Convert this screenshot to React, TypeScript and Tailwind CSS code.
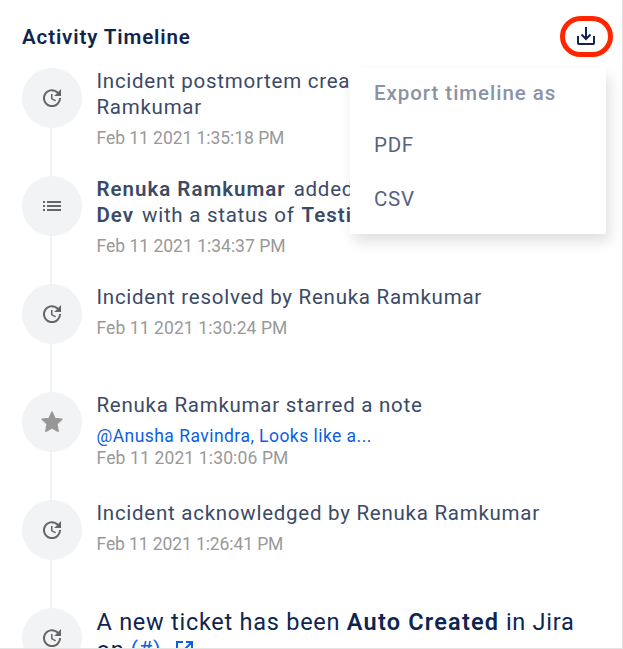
import type { ReactNode } from "react";

function UpdateIcon() {
  return (
    <svg width="24" height="24" viewBox="0 0 24 24" fill="#666">
      <path d="M21 10.12h-6.78l2.74-2.82c-2.73-2.7-7.15-2.8-9.88-.1-2.73 2.71-2.73 7.08 0 9.79s7.15 2.71 9.88 0C18.32 15.65 19 14.08 19 12.1h2c0 1.98-.88 4.55-2.64 6.29-3.51 3.48-9.21 3.48-12.72 0-3.5-3.47-3.53-9.11-.02-12.58s9.14-3.47 12.65 0L21 3v7.12zM12.5 8v4.25l3.5 2.08-.72 1.21L11 13V8h1.5z" />
    </svg>
  );
}

function ListIcon() {
  return (
    <svg width="24" height="24" viewBox="0 0 24 24" fill="#666">
      <path d="M3 13h2v-2H3v2zm0 4h2v-2H3v2zm0-8h2V7H3v2zm4 4h14v-2H7v2zm0 4h14v-2H7v2zM7 7v2h14V7H7z" />
    </svg>
  );
}

function StarIcon() {
  return (
    <svg width="24" height="24" viewBox="0 0 24 24" fill="#979797" stroke="#979797" strokeWidth="1.4" strokeLinejoin="round">
      <path d="M12 2l2.900 6.400 7.100.8-5.200 4.700 1.400 7.500-6.200-3.600-6.200 3.600 1.400-7.500L2 9.200l7.100-.8z" />
    </svg>
  );
}

function DownloadIcon() {
  return (
    <svg className="mr-[2px] mb-[2px]" width="20" height="20" viewBox="0 0 20 20" fill="none" stroke="#0f2550" strokeWidth="2">
      <path d="M10 1v12M5.500 8.500L10 13l4.500-4.500M2 10v7.200q0 .8.800.8h14.400q.8 0 .8-.8V10" />
    </svg>
  );
}

function Row({ icon, children, last }: { icon: ReactNode; children: ReactNode; last?: boolean }) {
  return (
    <li className="flex h-[108px] shrink-0 gap-[14.5px]">
      <div className="flex w-[60px] shrink-0 flex-col items-center">
        <div className="flex size-[60px] shrink-0 items-center justify-center rounded-full bg-[#f2f3f5]">{icon}</div>
        {!last && <div className="mr-[2px] w-[2px] grow bg-[#f2f3f5]" />}
      </div>
      <div className="min-w-0 whitespace-nowrap">{children}</div>
    </li>
  );
}

function Stamp({ children, tracking }: { children: ReactNode; tracking: string }) {
  return <div className={`text-[17.5px] leading-[22px] text-[#999] ${tracking}`}>{children}</div>;
}

function Strong({ children, className = "" }: { children: ReactNode; className?: string }) {
  return <b className={`font-semibold tracking-[1px] ${className}`}>{children}</b>;
}

export default function App() {
  return (
    <div className="relative flex h-[649px] w-[623px] flex-col overflow-hidden border-r border-b border-[#e4e4e4] bg-white font-['Roboto','Liberation_Sans',sans-serif] text-[20.5px] leading-[26px] tracking-[0.74px] text-[#3b4a66]">
      <header className="flex h-[68px] shrink-0 items-start justify-between pt-4 pr-[9px] pl-[22px]">
        <h1 className="pt-2 font-semibold tracking-[0.88px] text-[#0f2550]">Activity Timeline</h1>
        <button className="flex h-[41px] w-[53px] items-center justify-center rounded-[21px] border-[5px] border-[#ff2600]">
          <DownloadIcon />
        </button>
      </header>
      <ul className="flex flex-col pl-[22px]">
        <Row icon={<UpdateIcon />}>
          <div className="mb-[7px]">
            <p>Incident postmortem created by</p>
            <p>Ramkumar</p>
          </div>
          <Stamp tracking="tracking-[-0.05px]">Feb 11 2021 1:35:18 PM</Stamp>
        </Row>
        <Row icon={<ListIcon />}>
          <div className="mb-[7px]">
            <p><Strong className="mr-[8px]">Renuka Ramkumar</Strong>added</p>
            <p><Strong className="mr-[8px]">Dev</Strong>with a status of<Strong className="ml-[7px]">Testing</Strong></p>
          </div>
          <Stamp tracking="tracking-[0px]">Feb 11 2021 1:34:37 PM</Stamp>
        </Row>
        <Row icon={<UpdateIcon />}>
          <p className="mb-[7px]">Incident resolved by Renuka Ramkumar</p>
          <Stamp tracking="tracking-[0.09px]">Feb 11 2021 1:30:24 PM</Stamp>
        </Row>
        <Row icon={<StarIcon />}>
          <p className="mb-[7px]">Renuka Ramkumar starred a note</p>
          <a className="block text-[17.5px] leading-[22px] tracking-[0.46px] text-[#0b5fe0]">@Anusha Ravindra, Looks like a...</a>
          <Stamp tracking="tracking-[0.14px]">Feb 11 2021 1:30:06 PM</Stamp>
        </Row>
        <Row icon={<UpdateIcon />}>
          <p className="mb-[7px]">Incident acknowledged by Renuka Ramkumar</p>
          <Stamp tracking="tracking-[-0.1px]">Feb 11 2021 1:26:41 PM</Stamp>
        </Row>
        <Row icon={<UpdateIcon />} last>
          <div className="text-[23.5px] leading-[28px] text-[#0f2550]">
            <p>A new ticket has been <b className="font-semibold tracking-[1.2px]">Auto Created</b> in Jira</p>
            <p className="flex">on <a className="ml-[6px] flex text-[22px] text-[#0b5fe0]">(#)
              <svg className="mt-1 ml-[14px]" width="18" height="18" viewBox="0 0 18 18" fill="none" stroke="currentColor" strokeWidth="2"><path d="M8 2H2v15h15v-6M11 2h6v6M17 2L7 12" /></svg>
            </a></p>
          </div>
        </Row>
      </ul>
      <div className="absolute top-[68px] left-[350px] flex h-[166px] w-[256px] flex-col rounded-[3px] bg-white pt-3 pl-6 text-[#56637f] shadow-[4px_8px_14px_rgba(0,0,0,0.12)]">
        <p className="mb-[26px] font-medium tracking-[0.95px] text-[#8a94a6]">Export timeline as</p>
        <p className="mb-[28px]">PDF</p>
        <p>CSV</p>
      </div>
    </div>
  );
}
